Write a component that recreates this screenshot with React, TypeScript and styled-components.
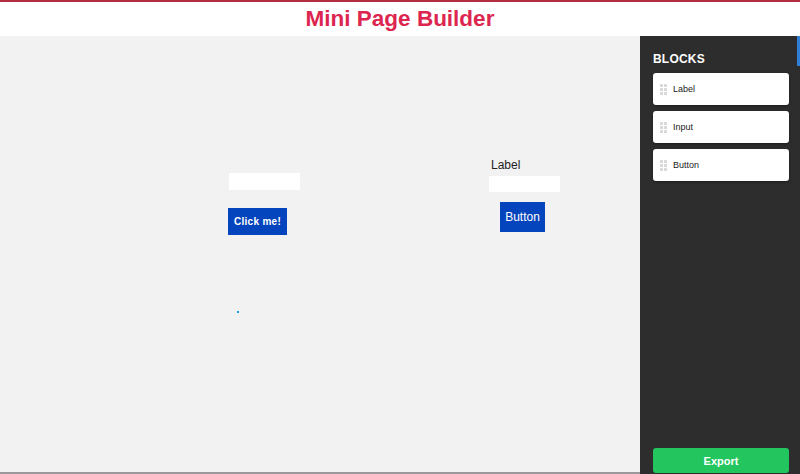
import styled, { createGlobalStyle } from "styled-components";

const GlobalStyle = createGlobalStyle`
  html, body {
    margin: 0;
    padding: 0;
    overflow: hidden;
  }
  body {
    font-family: "Liberation Sans", Arial, sans-serif;
    background: #ffffff;
  }
  *, *::before, *::after {
    box-sizing: border-box;
  }
`;

type Block = { id: string; name: string };

type CanvasItem =
  | { id: string; kind: "input"; x: number; y: number; w: number; h: number }
  | { id: string; kind: "button"; x: number; y: number; text: string; heavy?: boolean }
  | { id: string; kind: "label"; x: number; y: number; text: string }
  | { id: string; kind: "dot"; x: number; y: number };

const blocks: Block[] = [
  { id: "label", name: "Label" },
  { id: "input", name: "Input" },
  { id: "button", name: "Button" },
];

// positions relative to the canvas (canvas starts at y=36)
const items: CanvasItem[] = [
  { id: "i1", kind: "input", x: 229, y: 137, w: 71, h: 17 },
  { id: "b1", kind: "button", x: 228, y: 172, text: "Click me!", heavy: true },
  { id: "l1", kind: "label", x: 491, y: 122, text: "Label" },
  { id: "i2", kind: "input", x: 489, y: 140, w: 71, h: 16 },
  { id: "b2", kind: "button", x: 500, y: 166, text: "Button" },
  { id: "d1", kind: "dot", x: 237, y: 275 },
];

const Page = styled.div`
  display: flex;
  flex-direction: column;
  width: 800px;
  height: 474px;
`;

const Header = styled.header`
  height: 36px;
  border-top: 2px solid #b12f40;
  display: flex;
  align-items: center;
  justify-content: center;
  background: #ffffff;
`;

const Title = styled.h1`
  margin: 0;
  font-size: 22.5px;
  font-weight: 700;
  color: #dc2650;
`;

const Main = styled.div`
  flex: 1;
  display: flex;
  min-height: 0;
`;

const Canvas = styled.div`
  position: relative;
  flex: 1;
  background: #f2f2f2;
  border-bottom: 2px solid #999999;
`;

const Sidebar = styled.aside`
  position: relative;
  flex: 0 0 160px;
  padding: 14px 11px 0 13px;
  background: #2d2d2d;
  display: flex;
  flex-direction: column;
  gap: 6px;
`;

const ScrollThumb = styled.div`
  position: absolute;
  right: 0;
  top: 0;
  width: 3px;
  height: 30px;
  background: #2f7fd8;
`;

const SideTitle = styled.h2`
  margin: 2px 0 1px;
  font-size: 12px;
  font-weight: 700;
  color: #ffffff;
  letter-spacing: 0.2px;
`;

const BlockCard = styled.div`
  height: 32px;
  background: #ffffff;
  border-radius: 3px;
  box-shadow: 0 1px 3px rgba(0, 0, 0, 0.4);
  display: flex;
  align-items: center;
  gap: 6px;
  padding-left: 7px;
  font-size: 9px;
  color: #222222;
`;

const Grip = styled.span`
  display: grid;
  grid-template-columns: 3px 3px;
  grid-auto-rows: 3px;
  gap: 1px 1px;
  width: 7px;
  span {
    background: #d8d8d8;
    border-radius: 0.5px;
  }
`;

const Spacer = styled.div`
  flex: 1;
`;

const ExportButton = styled.button`
  height: 25px;
  margin-bottom: 1px;
  border: none;
  border-radius: 3px;
  background: #22c55e;
  color: #ffffff;
  font-family: "Liberation Sans", Arial, sans-serif;
  font-size: 11px;
  font-weight: 700;
`;

const Placed = styled.div`
  position: absolute;
`;

const FieldBox = styled.div`
  background: #ffffff;
`;

const CanvasButton = styled.div<{ $heavy?: boolean }>`
  background: #0444bc;
  color: #ffffff;
  display: flex;
  align-items: center;
  justify-content: center;
  ${({ $heavy }) =>
    $heavy
      ? `width: 59px; height: 27px; font-size: 10px; font-weight: 700; letter-spacing: 0.3px;`
      : `width: 45px; height: 30px; font-size: 12px;`}
`;

const CanvasLabel = styled.div`
  font-size: 12px;
  color: #222222;
`;

const Dot = styled.div`
  width: 2px;
  height: 2px;
  background: #1aa3e8;
`;

const renderItem = (it: CanvasItem) => {
  switch (it.kind) {
    case "input":
      return <FieldBox style={{ width: it.w, height: it.h }} />;
    case "button":
      return <CanvasButton $heavy={it.heavy}>{it.text}</CanvasButton>;
    case "label":
      return <CanvasLabel>{it.text}</CanvasLabel>;
    case "dot":
      return <Dot />;
  }
};

export default function App() {
  return (
    <Page>
      <GlobalStyle />
      <Header>
        <Title>Mini Page Builder</Title>
      </Header>
      <Main>
        <Canvas>
          {items.map((it) => (
            <Placed key={it.id} style={{ left: it.x, top: it.y }}>
              {renderItem(it)}
            </Placed>
          ))}
        </Canvas>
        <Sidebar>
          <ScrollThumb />
          <SideTitle>BLOCKS</SideTitle>
          {blocks.map((b) => (
            <BlockCard key={b.id}>
              <Grip>
                {Array.from({ length: 6 }).map((_, i) => (
                  <span key={i} />
                ))}
              </Grip>
              {b.name}
            </BlockCard>
          ))}
          <Spacer />
          <ExportButton>Export</ExportButton>
        </Sidebar>
      </Main>
    </Page>
  );
}
